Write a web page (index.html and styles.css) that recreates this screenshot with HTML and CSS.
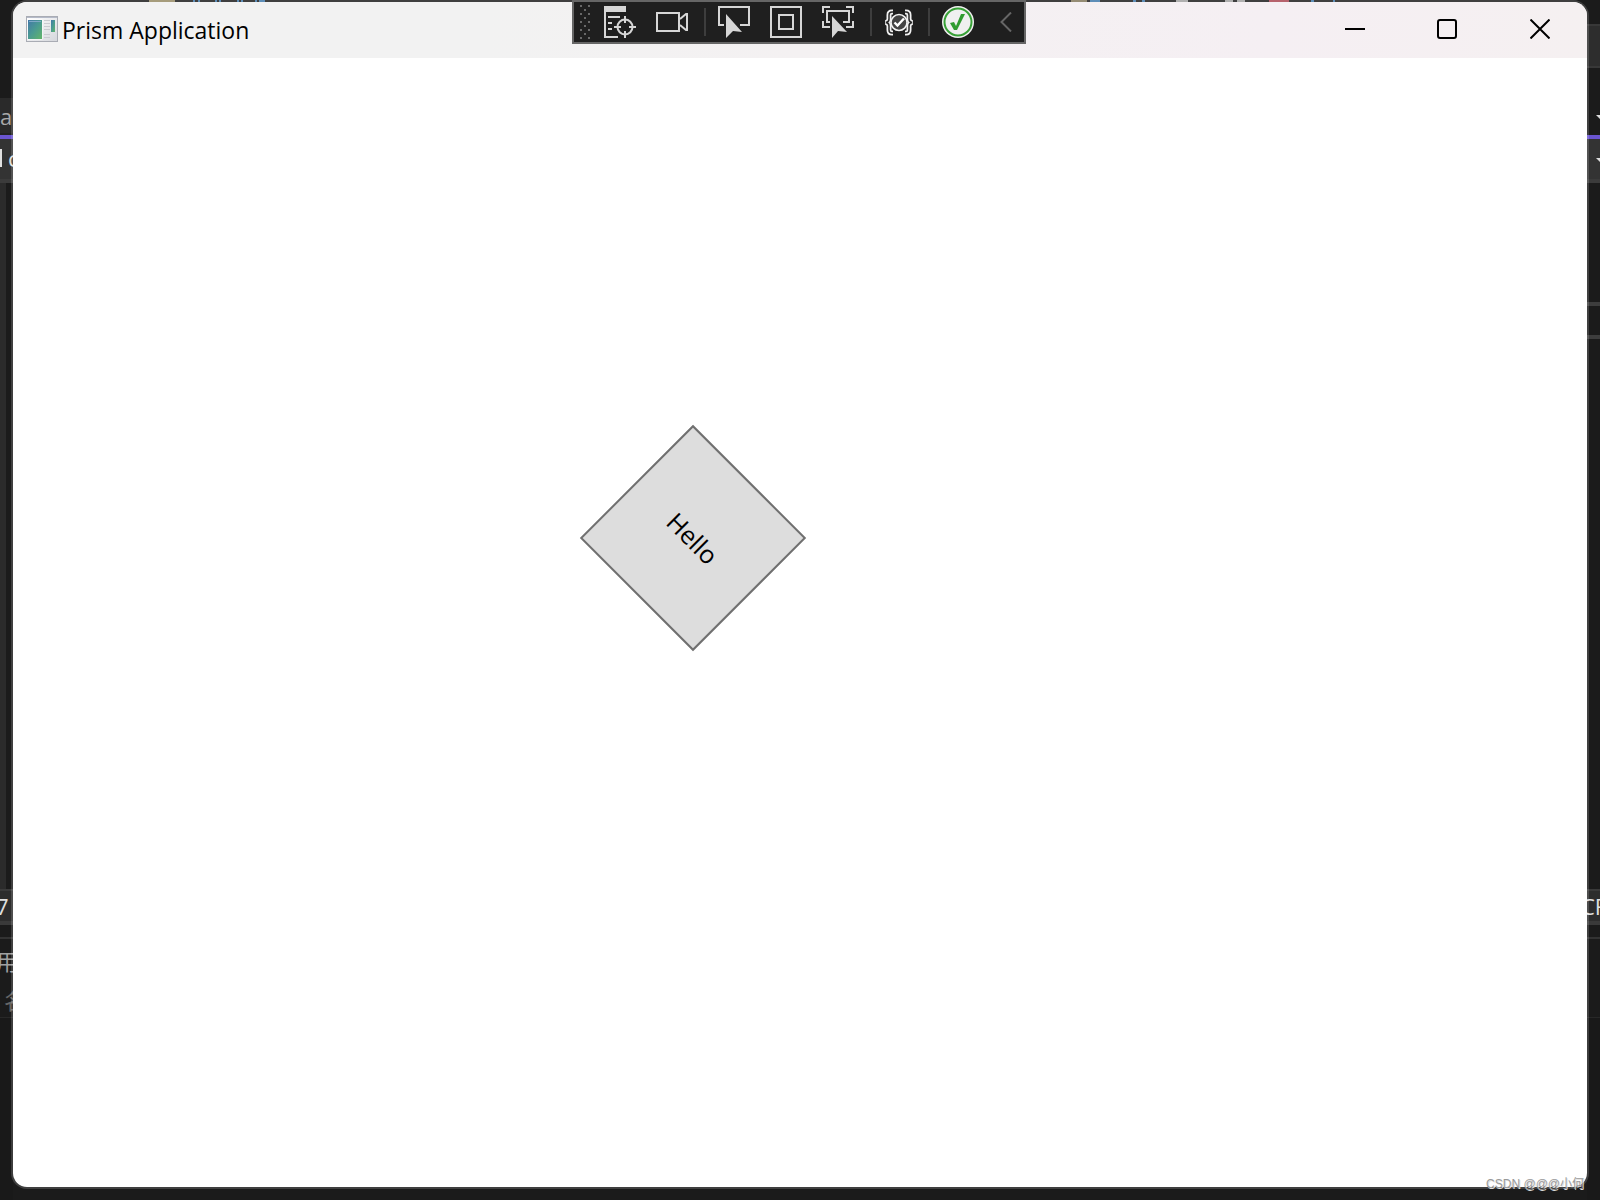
FILE: index.html
```html
<!DOCTYPE html>
<html lang="en">
<head>
<meta charset="utf-8">
<title>Prism Application</title>
<link rel="stylesheet" href="styles.css">
</head>
<body>
<div class="desktop">
  <div class="editor" aria-hidden="true">
    <div class="edge edge-left">
      <div class="menu-space"></div>
      <div class="tab">a</div>
      <div class="accent"></div>
      <div class="crumb"><i class="bar"></i>c</div>
      <div class="code gutter"></div>
      <div class="status">7</div>
      <div class="gap"></div>
      <div class="panel"><span>用</span><span class="dim">名</span></div>
      <div class="rest"></div>
    </div>
    <div class="edge edge-right">
      <div class="menu-space"><div class="menu-band"></div></div>
      <div class="tab plain"><i class="caret"></i></div>
      <div class="accent"></div>
      <div class="crumb"><i class="caret"></i></div>
      <div class="code"><div class="split"></div></div>
      <div class="status">CF</div>
      <div class="gap"></div>
      <div class="panel"></div>
      <div class="rest"></div>
    </div>
  </div>

  <main class="window">
    <header class="titlebar">
      <svg class="app-icon" viewBox="0 0 32 26" width="32" height="26">
        <defs>
          <linearGradient id="pane" x1="0" y1="0" x2="1" y2="1"><stop offset="0" stop-color="#4277a8"/><stop offset=".5" stop-color="#4a9b91"/><stop offset="1" stop-color="#62b569"/></linearGradient>
          <linearGradient id="frame" x1="0" y1="0" x2="1" y2="1"><stop offset="0" stop-color="#fff"/><stop offset="1" stop-color="#d5d7dc"/></linearGradient>
        </defs>
        <rect x=".5" y=".5" width="31" height="25" fill="url(#frame)" stroke="#a9acb4"/>
        <path d="M1 1.500h30" stroke="#b4bac8"/>
        <rect x="1.500" y="3.500" width="15" height="20" fill="#fff"/>
        <rect x="2" y="4" width="14" height="19" fill="url(#pane)"/>
        <path d="M3 5.500h12" stroke="#7fa9c6"/>
        <path d="M18 4.500h6M18 7.500h6M18 10.500h6M18 13.500h6M18 18.500h6M18 21.500h6" stroke="#c9cbd0"/>
        <rect x="25" y="4" width="4" height="12" fill="url(#pane)"/>
      </svg>
      <h1 class="title">Prism Application</h1>
      <div class="controls">
        <button class="control" aria-label="Minimize"><svg width="20" height="20" viewBox="0 0 20 20"><path d="M0 10h20"/></svg></button>
        <button class="control" aria-label="Maximize"><svg width="20" height="20" viewBox="0 0 20 20"><rect x="1" y="1" width="18" height="18" rx="2"/></svg></button>
        <button class="control close" aria-label="Close"><svg width="20" height="20" viewBox="0 0 20 20"><path d="M.5.5l19 19M19.500.5l-19 19"/></svg></button>
      </div>
    </header>
    <section class="content">
      <button class="diamond">Hello</button>
    </section>
  </main>

  <nav class="toolbar" aria-label="Debug toolbar">
    <svg class="grip" width="10" height="34" viewBox="0 0 10 34"><path d="M0 1h2M8 1h2M4 5h2M0 9h2M8 9h2M4 13h2M0 17h2M8 17h2M4 21h2M0 25h2M8 25h2M4 29h2M0 33h2M8 33h2" stroke="#686868" stroke-width="2"/></svg>
    <div class="group">
      <button class="tool" aria-label="Live visual tree"><svg viewBox="0 0 32 32"><path class="fill" d="M0 0h22v6H0z"/><path d="M1 0v31h13M4 11h12M4 17h4M4 23h4"/><circle cx="21" cy="21" r="7.500"/><path d="M21 10v7M21 25v7M10 21h7M25 21h7"/></svg></button>
      <button class="tool" aria-label="Record"><svg viewBox="0 0 32 32"><path d="M1 7h22v18H1zM24 13l6-5h1v16h-1l-6-5"/></svg></button>
    </div>
    <i class="separator wide"></i>
    <div class="group">
      <button class="tool" aria-label="Select element"><svg viewBox="0 0 32 32"><path d="M6 19H1V1h30v18h-9"/><path class="fill" d="M8 8l16 18-9-1-7 7z"/></svg></button>
      <button class="tool" aria-label="Display layout adorners"><svg viewBox="0 0 32 32"><path d="M1 1h30v30H1zM9 9h14v14H9z"/></svg></button>
      <button class="tool" aria-label="Track focused element"><svg viewBox="0 0 32 32"><path d="M1 7V1h7M24 1h7v6M1 15v6h7M24 21h7v-6M8 16H5V5h22v11h-6"/><path class="fill" d="M10 10l15 16-9-1-6 7z"/></svg></button>
    </div>
    <i class="separator wide"></i>
    <button class="tool" aria-label="Binding failures"><svg viewBox="0 0 32 32"><path d="M9 6H8Q5 6 5 9v4q0 3-3.500 3.500Q5 17 5 20v4q0 3 3 3h1M21 6h1q3 0 3 3v4q0 3 3.500 3.500Q25 17 25 20v4q0 3-3 3h-1" stroke="#f2f2f2" stroke-width="5"/><path d="M9 6H8Q5 6 5 9v4q0 3-3 3.500 3 .5 3 3.500v4q0 3 3 3h1M21 6h1q3 0 3 3v4q0 3 3 3.500-3 .5-3 3.500v4q0 3-3 3h-1" stroke="#2a2a2a" stroke-width="1.500"/><circle cx="15" cy="16.500" r="8" fill="#444" stroke="#f2f2f2" stroke-width="1.600"/><path d="M10.500 16.500l3 3 6.500-7" stroke="#fff" stroke-width="2.400"/></svg></button>
    <i class="separator"></i>
    <button class="tool" aria-label="Hot reload ready"><svg viewBox="0 0 32 32"><circle cx="16" cy="16" r="16" fill="#f0f0f0" stroke="none"/><circle cx="16" cy="16" r="13.500" stroke="#38a137"/><path d="M8 17l4-1 2 4 5-12h4l-8 16h-3z" fill="#309c30" stroke="none"/></svg></button>
    <button class="collapse" aria-label="Collapse toolbar"><svg width="12" height="20" viewBox="0 0 12 20"><path d="M11 .5L1.500 10l9.500 9.500"/></svg></button>
  </nav>
  <p class="watermark">CSDN @@@小何</p>
</div>
</body>
</html>
```
FILE: styles.css
```css
* { box-sizing: border-box; }
body { margin: 0; font-family: "Open Sans", "Noto Sans CJK SC", sans-serif; }
button { padding: 0; border: 0; background: none; font: inherit; color: inherit; }
svg { display: block; }

.desktop { position: relative; height: 100vh; overflow: hidden; background: #1b1b1b; }

/* Editor visible around the window */
.editor {
  display: flex;
  justify-content: space-between;
  height: 100%;
  background: linear-gradient(90deg,
    transparent 149px, #968a63 149px 175px, transparent 175px 193px,
    #3f78aa 193px 195px, transparent 195px 198px, #3f78aa 198px 200px, transparent 200px 215px,
    #3f78aa 215px 217px, transparent 217px 219px, #3f78aa 219px 221px, transparent 221px 237px,
    #3f78aa 237px 239px, transparent 239px 241px, #3f78aa 241px 243px, transparent 243px 255px,
    #3f78aa 255px 257px, transparent 257px 259px, #3f78aa 259px 265px, transparent 265px 1071px,
    #81775a 1071px 1087px, transparent 1087px 1090px, #3f78aa 1090px 1100px, transparent 1100px 1133px,
    #3f78aa 1133px 1136px, transparent 1136px 1142px, #3f78aa 1142px 1145px, transparent 1145px 1176px,
    #a0a0a0 1176px 1188px, transparent 1188px 1225px, #a0a0a0 1225px 1233px, transparent 1233px 1237px,
    #a0a0a0 1237px 1245px, transparent 1245px 1269px, #a94450 1269px 1289px, transparent 1289px 1311px,
    #3f78aa 1311px 1314px, transparent 1314px 1333px, #3f78aa 1333px 1335px, transparent 1335px) 0 0 / 100% 2px no-repeat;
}
.edge { display: flex; flex-direction: column; width: 13px; overflow: hidden; font-size: 22px; color: #e0e0e0; }
.edge > div { flex-shrink: 0; }
.menu-space { height: 98px; padding-top: 24px; }
.menu-band { height: 44px; background: #2d2d2d; border: solid #383838; border-width: 2px 0; }
.tab { height: 37px; line-height: 36px; color: #a8a8a8; background: #2a2a2a; border-bottom: 2px solid #222; }
.plain { background: none; border-color: transparent; }
.accent { height: 4px; background: #6a55d0; }
.crumb { display: flex; gap: 6px; height: 44px; line-height: 38px; background: #333; border-bottom: 4px solid #3b3b3b; }
.bar { flex: none; width: 2px; height: 18px; margin-top: 10px; background: #e0e0e0; }
.caret { display: block; flex: none; width: 10px; height: 5px; margin: 19px 0 0 9px; background: #ddd; clip-path: polygon(0 0, 100% 0, 50% 100%); }
.tab .caret { margin-top: 17px; }
.code { height: 706px; padding-top: 119px; }
.gutter { width: 6px; background: #2b2b2b; }
.split { height: 37px; border: solid #3d3d3d; border-width: 4px 0; }
.status { height: 36px; line-height: 30px; background: #2d2d2d; border: solid #3a3a3a; border-width: 2px 0 4px; }
.edge .status { text-indent: -4px; }
.edge-right .status { text-indent: -6px; }
.gap { height: 14px; border-bottom: 2px solid #333; }
.panel { display: flex; flex-direction: column; height: 79px; padding-top: 3px; line-height: 39px; color: #a0a0a0; border-bottom: 1px solid #282828; }
.panel span { margin-left: -4px; white-space: nowrap; }
.panel .dim { margin-left: 4px; color: #666; }
.rest { flex: 1; background: #191919; }

.window {
  position: absolute;
  inset: 0 11px 11px;
  display: flex;
  flex-direction: column;
  overflow: hidden;
  background: #fff;
  background-clip: padding-box;
  border: 2px solid rgba(255, 255, 255, .16);
  border-radius: 16px;
}
.titlebar {
  display: flex;
  align-items: center;
  gap: 4px;
  height: 56px;
  padding: 0 0 2px 13px;
  background: linear-gradient(90deg, #f2f2f2 30%, #f4f1f2 50%, #f5eff3 80%, #f5f0f1);
}
.title { margin: 0; padding-top: 2px; font-size: 23px; font-weight: 400; line-height: 32px; }
.controls { display: flex; align-self: stretch; margin-left: auto; }
.control { display: grid; place-items: center; width: 92px; }
.control svg { fill: none; stroke: #000; stroke-width: 2; }
.close { width: 94px; }
.content { flex: 1; padding: 400px 0 0 600px; }
.diamond {
  width: 160px;
  height: 160px;
  font-size: 25px;
  color: #000;
  background: #ddd;
  border: 2px solid #707070;
  transform: rotate(45deg);
}

.toolbar {
  position: absolute;
  top: 0;
  left: 50%;
  display: flex;
  align-items: center;
  height: 44px;
  margin-left: -228px;
  padding: 0 6px;
  background: #1f1f1f;
  border: 2px solid #666;
}
.grip { margin-right: 14px; }
.group { display: flex; gap: 20px; }
.tool { width: 32px; height: 32px; }
.tool svg { width: 32px; height: 32px; fill: none; stroke: #d6d6d6; stroke-width: 2; }
.tool .fill { fill: #d6d6d6; stroke: none; }
.separator { width: 2px; height: 28px; margin: 0 12px; background: #3d3d3d; }
.wide { margin-left: 16px; }
.collapse { display: grid; place-items: center; width: 24px; height: 32px; margin-left: 20px; }
.collapse svg { fill: none; stroke: #666; stroke-width: 2; }

.watermark {
  position: absolute;
  right: 16px;
  bottom: 7px;
  margin: 0;
  font: 12px/18px "Liberation Sans", "Noto Sans CJK SC", sans-serif;
  color: #999;
  text-shadow: 1px 1px 0 #ddd;
}
```
